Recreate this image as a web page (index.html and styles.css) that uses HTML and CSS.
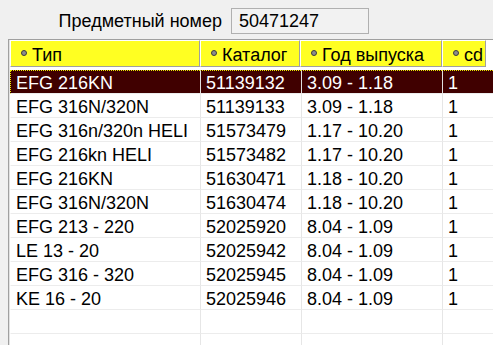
FILE: index.html
```html
<!DOCTYPE html>
<html>
<head>
<meta charset="utf-8">
<link rel="stylesheet" href="styles.css">
</head>
<body>
<div class="topbar">
  <div class="label">Предметный номер</div>
  <div class="field">50471247</div>
</div>
<div class="grid">
  <div class="inner">
    <div class="head">
      <div class="hcell"><span class="dot"></span><span>Тип</span></div>
      <div class="hcell"><span class="dot"></span><span>Каталог</span></div>
      <div class="hcell"><span class="dot"></span><span>Год выпуска</span></div>
      <div class="hcell"><span class="dot"></span><span>cd</span></div>
    </div>
    <div class="rows">
      <div class="row sel"><div class="c">EFG 216KN</div><div class="c">51139132</div><div class="c">3.09 - 1.18</div><div class="c">1</div></div>
      <div class="row"><div class="c">EFG 316N/320N</div><div class="c">51139133</div><div class="c">3.09 - 1.18</div><div class="c">1</div></div>
      <div class="row"><div class="c">EFG 316n/320n HELI</div><div class="c">51573479</div><div class="c">1.17 - 10.20</div><div class="c">1</div></div>
      <div class="row"><div class="c">EFG 216kn HELI</div><div class="c">51573482</div><div class="c">1.17 - 10.20</div><div class="c">1</div></div>
      <div class="row"><div class="c">EFG 216KN</div><div class="c">51630471</div><div class="c">1.18 - 10.20</div><div class="c">1</div></div>
      <div class="row"><div class="c">EFG 316N/320N</div><div class="c">51630474</div><div class="c">1.18 - 10.20</div><div class="c">1</div></div>
      <div class="row"><div class="c">EFG 213 - 220</div><div class="c">52025920</div><div class="c">8.04 - 1.09</div><div class="c">1</div></div>
      <div class="row"><div class="c">LE 13 - 20</div><div class="c">52025942</div><div class="c">8.04 - 1.09</div><div class="c">1</div></div>
      <div class="row"><div class="c">EFG 316 - 320</div><div class="c">52025945</div><div class="c">8.04 - 1.09</div><div class="c">1</div></div>
      <div class="row"><div class="c">KE 16 - 20</div><div class="c">52025946</div><div class="c">8.04 - 1.09</div><div class="c">1</div></div>
      <div class="row"><div class="c"></div><div class="c"></div><div class="c"></div><div class="c"></div></div>
      <div class="row"><div class="c"></div><div class="c"></div><div class="c"></div><div class="c"></div></div>
    </div>
  </div>
</div>
</body>
</html>
```
FILE: styles.css
```css
html, body {
  margin: 0;
  padding: 0;
  background: #f0f0f0;
  width: 493px;
  height: 345px;
  overflow: hidden;
  font-family: "Liberation Sans", Arial, sans-serif;
  font-size: 18px;
  color: #000;
}
.topbar {
  display: flex;
  align-items: flex-start;
  height: 39px;
  box-sizing: border-box;
  padding-top: 8px;
}
.label {
  width: 222px;
  text-align: right;
  line-height: 26px;
  white-space: nowrap;
}
.field {
  margin-left: 9px;
  width: 138px;
  height: 26px;
  box-sizing: border-box;
  border: 1px solid #b0b0b0;
  background: #f2f2f2;
  padding-left: 7px;
  line-height: 24px;
}
.grid {
  margin-left: 8px;
  border-top: 1px solid #a0a0a0;
  border-left: 1px solid #a0a0a0;
  background: #fff;
  height: 306px;
  box-sizing: border-box;
}
.inner {
  border-left: 1px solid #e2e2e2;
  height: 100%;
}
.head {
  display: grid;
  grid-template-columns: 190px 100px 142px 44px;
  margin-bottom: 3px;
}
.hcell {
  display: flex;
  align-items: flex-start;
  box-sizing: border-box;
  height: 27px;
  border-top: 1px solid #fff;
  border-left: 1px solid #fff;
  border-right: 1px solid #a0a0a0;
  border-bottom: 1px solid #a0a0a0;
  background: #ffff22;
  padding: 5px 0 0 10px;
  line-height: 19px;
  white-space: nowrap;
  overflow: hidden;
}
.dot {
  width: 4px;
  height: 4px;
  margin-top: 4px;
  margin-right: 5px;
  border: 1px solid #3c3c3c;
  border-radius: 50%;
  background: #8c8c8c;
  flex: none;
}
.row {
  display: grid;
  grid-template-columns: 190px 101px 141px 1fr;
}
.c {
  box-sizing: border-box;
  height: 24px;
  border-left: 1px solid #e6e6e6;
  border-bottom: 1px solid #ececec;
  padding: 4px 0 0 5px;
  line-height: 19px;
  white-space: nowrap;
  overflow: hidden;
}
.c:first-child {
  border-left-color: #fff;
}
.sel .c {
  background: #400000;
  color: #fff;
  border-top: 1px dotted #e8e800;
  padding-top: 3px;
  border-left-color: #e0e0e0;
}
.sel .c:first-child {
  border-left: 1px dotted #e8e800;
}
```
